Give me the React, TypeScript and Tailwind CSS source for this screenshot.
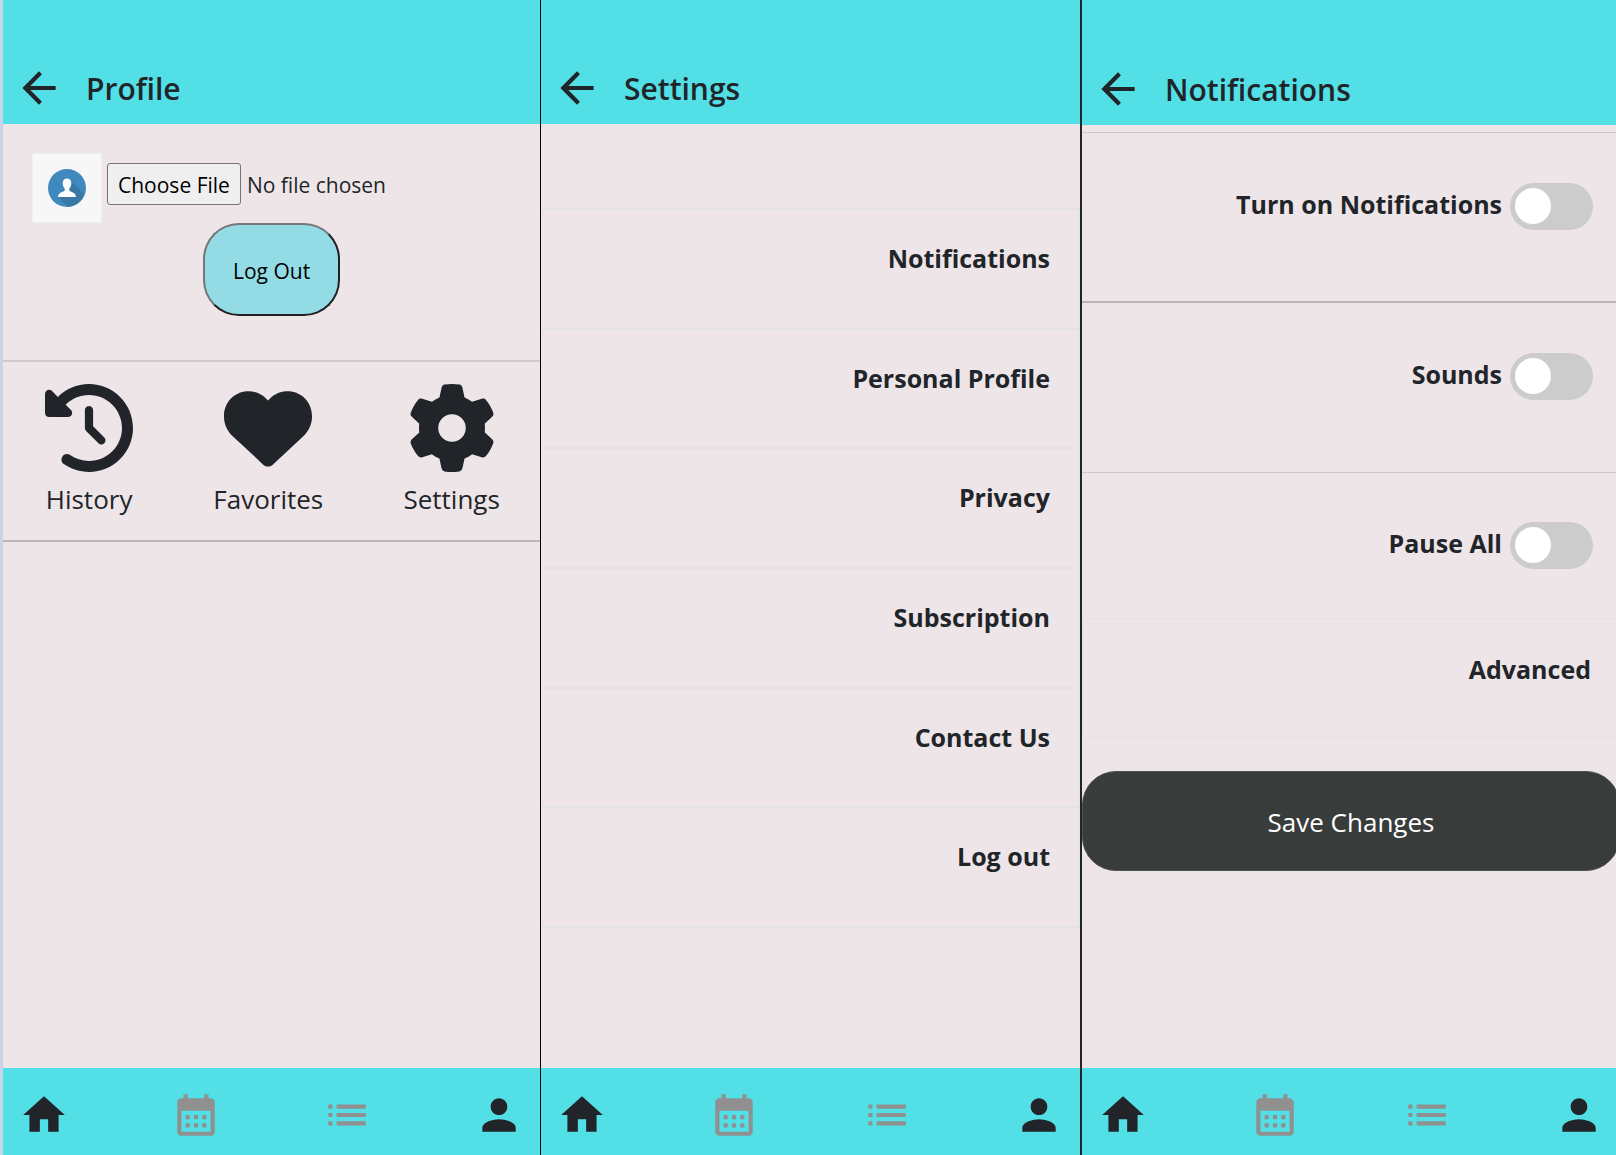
import type { ReactNode } from "react";
import {
  MdArrowBack,
  MdCalendarMonth,
  MdHome,
  MdList,
  MdPerson,
} from "react-icons/md";
import { FaClockRotateLeft, FaGear, FaHeart } from "react-icons/fa6";

function Header({ title, tall = false }: { title: string; tall?: boolean }) {
  return (
    <header
      className={`flex shrink-0 items-center gap-[22px] bg-[#52dfe6] pb-[11px] pl-[11px] ${tall ? "pt-16" : "pt-[63px]"}`}
    >
      <button type="button" aria-label="Back" className="shrink-0">
        <MdArrowBack className="size-[50px]" />
      </button>
      <h1 className="pt-0.5 text-[30px] leading-12 font-semibold">{title}</h1>
    </header>
  );
}

function BottomNav() {
  return (
    <nav className="mt-auto flex shrink-0 justify-between bg-[#52dfe6] px-4 pt-[22px] pb-[15px]">
      <a href="#home" aria-label="Home">
        <MdHome className="size-[50px]" />
      </a>
      <a href="#calendar" aria-label="Calendar" className="text-[#909090]">
        <MdCalendarMonth className="size-[50px]" />
      </a>
      <a href="#list" aria-label="List" className="text-[#909090]">
        <MdList className="size-[50px]" />
      </a>
      <a href="#profile" aria-label="Profile">
        <MdPerson className="size-[50px]" />
      </a>
    </nav>
  );
}

function Avatar() {
  return (
    <svg viewBox="0 0 70 70" className="size-[70px] shrink-0" role="img" aria-label="Avatar">
      <rect width="70" height="70" fill="#efefef" />
      <rect x="1" y="1" width="68" height="68" fill="#f7f7f7" />
      <circle cx="35" cy="35" r="19" fill="#4089bf" />
      <path d="M39 28 L52 41 A19 19 0 0 1 36 54 L26 44 Z" fill="#3878a5" />
      <path
        d="M35 25.500c-2.600 0-4.300 1.800-4.300 4.600 0 2.200.8 4.300 2 5.500v2c-1 1.500-6.700 1.700-6.700 6.400h18c0-4.700-5.700-4.900-6.700-6.400v-2c1.200-1.200 2-3.300 2-5.500 0-2.800-1.700-4.600-4.300-4.600z"
        fill="#fff"
      />
    </svg>
  );
}

function Shortcut({ href, icon, label }: { href: string; icon: ReactNode; label: string }) {
  return (
    <a href={href} className="flex flex-col items-center">
      {icon}
      <span className="mt-[7px] text-[26px] leading-10">{label}</span>
    </a>
  );
}

function ProfileScreen() {
  return (
    <section className="flex min-w-0 flex-[537] flex-col">
      <Header title="Profile" />
      <div className="flex items-start gap-[5px] pt-[29px] pl-[29px]">
        <Avatar />
        <input
          type="file"
          aria-label="Choose a profile picture"
          className="mt-[10px] min-w-0 flex-1 text-[21px] leading-[30px] file:mr-1.5 file:rounded-[3px] file:border file:border-solid file:border-[#767676] file:bg-[#efefef] file:px-[10px] file:pt-[6px] file:pb-1 file:text-black"
        />
      </div>
      <button
        type="button"
        className="ml-[200px] self-start rounded-[36px] border-2 border-t-[#767676] border-r-[#212121] border-b-[#212121] border-l-[#767676] bg-[#93dce5] px-7 pt-[31px] pb-7 text-[21px] leading-[30px] text-black"
      >
        Log Out
      </button>
      <div className="mt-11 flex justify-around border-t-2 border-b-2 border-t-[#d0c8cb] border-b-[#bcb4b7] pt-[22px] pb-[21px] pl-0.5">
        <Shortcut href="#history" icon={<FaClockRotateLeft className="size-[88px]" />} label="History" />
        <Shortcut href="#favorites" icon={<FaHeart className="size-[88px]" />} label="Favorites" />
        <Shortcut href="#settings" icon={<FaGear className="size-[88px]" />} label="Settings" />
      </div>
      <BottomNav />
    </section>
  );
}

const settingsItems = [
  "Notifications",
  "Personal Profile",
  "Privacy",
  "Subscription",
  "Contact Us",
  "Log out",
];

function SettingsScreen() {
  return (
    <section className="flex min-w-0 flex-[539] flex-col border-l border-black">
      <Header title="Settings" />
      <ul className="mt-[84px] flex min-h-[720px] flex-col divide-y-2 divide-[#e2e2e7] border-2 border-[#e2e2e7] border-l-transparent">
        {settingsItems.map((item) => (
          <li key={item} className="flex-1">
            <a
              href={`#${item}`}
              className="block pt-[30px] pr-7 text-right text-[25px] leading-9 font-bold"
            >
              {item}
            </a>
          </li>
        ))}
      </ul>
      <BottomNav />
    </section>
  );
}

function ToggleRow({ label }: { label: string }) {
  return (
    <label className="flex items-center justify-end gap-2 pr-[27px]">
      <span className="pb-1.5 text-[25px] leading-9 font-bold">{label}</span>
      <input
        type="checkbox"
        className="h-[47px] w-[83px] appearance-none rounded-full bg-[#ccc] p-[5px] before:block before:size-[36px] before:rounded-full before:bg-white checked:bg-[#2196f3] checked:before:translate-x-9"
      />
    </label>
  );
}

function NotificationsScreen() {
  return (
    <section className="flex min-w-0 flex-[534] flex-col overflow-hidden border-l-2 border-[#212529]">
      <div className="-mr-1 flex flex-1 flex-col">
        <Header title="Notifications" tall />
        <div className="mt-[7px] border-t border-[#cfc5c9] pt-[50px] pb-[71px]">
          <ToggleRow label="Turn on Notifications" />
        </div>
        <div className="border-t-2 border-[#bcb4b7] pt-[50px] pb-[72px]">
          <ToggleRow label="Sounds" />
        </div>
        <div className="border-t border-[#cfc5c9] pt-[49px] pb-[49px]">
          <ToggleRow label="Pause All" />
        </div>
        <a
          href="#advanced"
          className="block border border-[#e5e1e4] pt-8 pr-7 pb-[50px] text-right text-[25px] leading-9 font-bold"
        >
          Advanced
        </a>
        <button
          type="button"
          className="mt-[33px] rounded-[34px] border border-[#4d5150] bg-[#383c3b] pt-[30px] pb-7 text-[26px] leading-10 text-white"
        >
          Save Changes
        </button>
        <BottomNav />
      </div>
    </section>
  );
}

export default function App() {
  return (
    <main className="flex min-h-screen border-l-[3px] border-[#c9d5e7] bg-[#eee5e8] font-['Open_Sans','Noto_Sans',sans-serif] text-[#212529]">
      <ProfileScreen />
      <SettingsScreen />
      <NotificationsScreen />
    </main>
  );
}
